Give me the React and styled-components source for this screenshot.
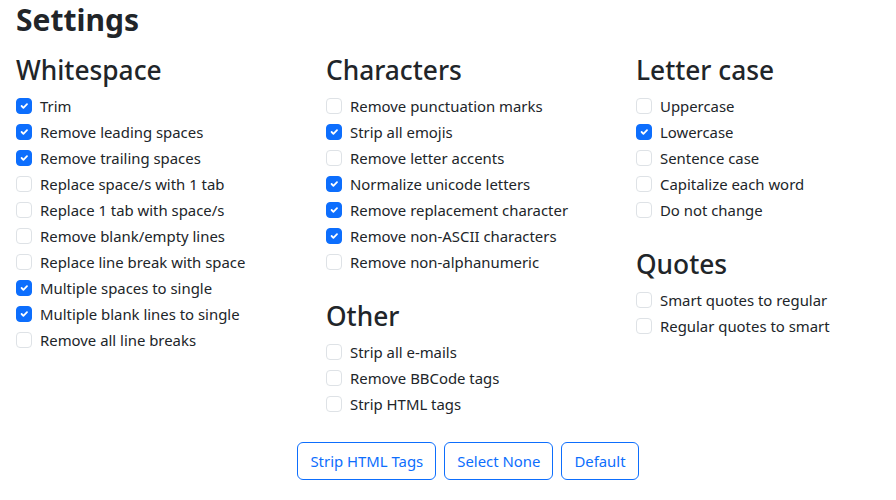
import React from "react";
import styled, { createGlobalStyle } from "styled-components";

const Global = createGlobalStyle`
  html, body { margin: 0; padding: 0; background: #fff; overflow: hidden; }
  body { font-family: "Noto Sans", "Open Sans", sans-serif; color: #212529; }
  * { box-sizing: border-box; }
`;

const Page = styled.div`
  width: 904px;
  margin-left: 16px;
`;

const Title = styled.h1`
  margin: 0;
  font-size: 30px;
  font-weight: 700;
  line-height: 40px;
`;

const Columns = styled.div`
  display: grid;
  grid-template-columns: 310px 310px 284px;
  margin-top: 14px;
`;

const Column = styled.div`
  display: flex;
  flex-direction: column;
`;

const Section = styled.section`
  margin-bottom: ${(p) => (p.$last ? "0" : "24px")};
`;

const Heading = styled.h2`
  margin: 0 0 8px;
  font-size: 26.3px;
  font-weight: 500;
  line-height: 32px;
`;

const Row = styled.label`
  display: flex;
  align-items: center;
  gap: 8px;
  height: 24px;
  margin-bottom: 2px;
  font-size: 14.9px;
  line-height: 24px;
`;

const Box = styled.span`
  width: 16px;
  height: 16px;
  flex: none;
  border-radius: 4px;
  border: 1px solid ${(p) => (p.$on ? "#0d6efd" : "#dee2e6")};
  background: ${(p) => (p.$on ? "#0d6efd" : "#fff")};
  display: flex;
  align-items: center;
  justify-content: center;
`;

const Buttons = styled.div`
  display: flex;
  justify-content: center;
  gap: 8px;
  margin-top: 24px;
`;

const Button = styled.button`
  font-family: inherit;
  font-size: 14.9px;
  line-height: 24px;
  padding: 6px 12px;
  border: 1px solid #0d6efd;
  border-radius: 6px;
  background: #fff;
  color: #0d6efd;
`;

const Check = ({ on, children }) => (
  <Row>
    <Box $on={on}>
      {on && (
        <svg width="12" height="12" viewBox="0 0 20 20">
          <path d="M6 10l3 3 6-6" fill="none" stroke="#fff" strokeWidth="3" strokeLinecap="round" strokeLinejoin="round" />
        </svg>
      )}
    </Box>
    {children}
  </Row>
);

const Group = ({ title, items, last }) => (
  <Section $last={last}>
    <Heading>{title}</Heading>
    {items.map(([t, on]) => (
      <Check key={t} on={on}>{t}</Check>
    ))}
  </Section>
);

export default function App() {
  return (
    <Page>
      <Global />
      <Title>Settings</Title>
      <Columns>
        <Column>
          <Group
            title="Whitespace"
            items={[
              ["Trim", true],
              ["Remove leading spaces", true],
              ["Remove trailing spaces", true],
              ["Replace space/s with 1 tab", false],
              ["Replace 1 tab with space/s", false],
              ["Remove blank/empty lines", false],
              ["Replace line break with space", false],
              ["Multiple spaces to single", true],
              ["Multiple blank lines to single", true],
              ["Remove all line breaks", false],
            ]}
            last
          />
        </Column>
        <Column>
          <Group
            title="Characters"
            items={[
              ["Remove punctuation marks", false],
              ["Strip all emojis", true],
              ["Remove letter accents", false],
              ["Normalize unicode letters", true],
              ["Remove replacement character", true],
              ["Remove non-ASCII characters", true],
              ["Remove non-alphanumeric", false],
            ]}
          />
          <Group
            title="Other"
            items={[
              ["Strip all e-mails", false],
              ["Remove BBCode tags", false],
              ["Strip HTML tags", false],
            ]}
            last
          />
        </Column>
        <Column>
          <Group
            title="Letter case"
            items={[
              ["Uppercase", false],
              ["Lowercase", true],
              ["Sentence case", false],
              ["Capitalize each word", false],
              ["Do not change", false],
            ]}
          />
          <Group
            title="Quotes"
            items={[
              ["Smart quotes to regular", false],
              ["Regular quotes to smart", false],
            ]}
            last
          />
        </Column>
      </Columns>
      <Buttons>
        <Button>Strip HTML Tags</Button>
        <Button>Select None</Button>
        <Button>Default</Button>
      </Buttons>
    </Page>
  );
}
